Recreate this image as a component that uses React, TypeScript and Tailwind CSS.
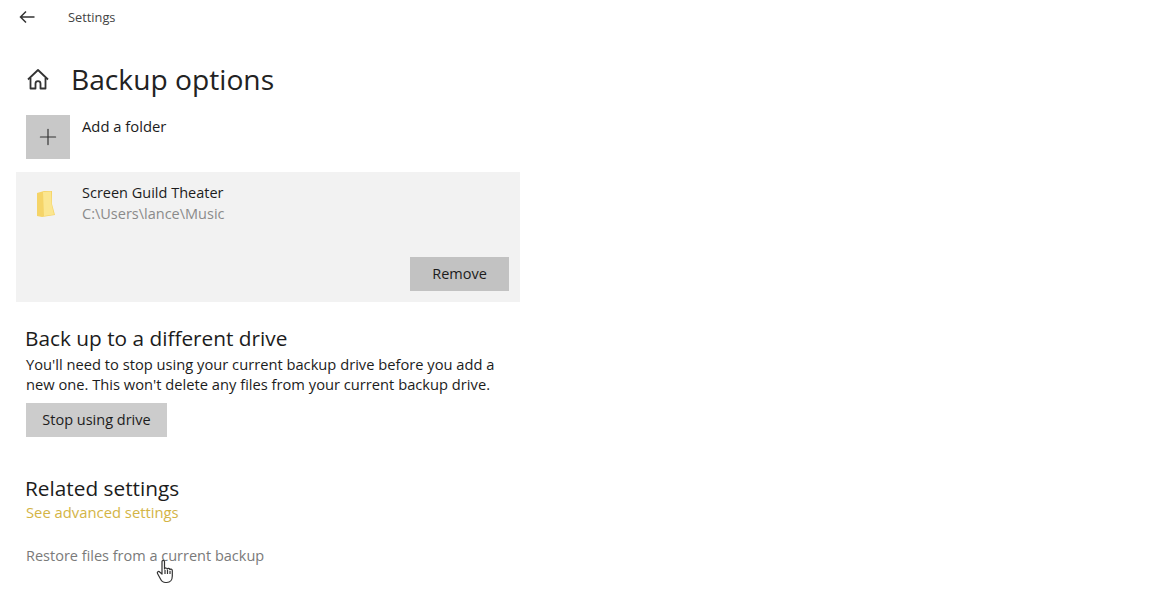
/**
 * Backup options - Windows settings page.
 */
import { Plus } from 'lucide-react';

const font = "font-['Open_Sans','Noto_Sans',sans-serif]";

function BackArrow() {
  return (
    <svg width="16" height="14" viewBox="0 0 16 14" fill="none" stroke="#333333" strokeWidth="1.500" className="-translate-y-px">
      <path d="M15.500 7H1.500M7 1.500 1.500 7 7 12.500" />
    </svg>
  );
}

function HomeIcon() {
  return (
    <svg width="22" height="22" viewBox="0 0 22 22" fill="none" stroke="#333333" strokeWidth="1.800" strokeLinejoin="round">
      <path d="M1 11.500 11 2l10 9.500" />
      <path d="M3.500 10v10.500h5v-5c0-3.300 5-3.300 5 0v5h5V10" />
    </svg>
  );
}

function FolderIcon() {
  return (
    <svg width="20" height="28" viewBox="0 0 20 28" className="shrink-0">
      <path d="M1 3 L8 1 L16 1 L16 14 L19 25 L6 27 L1 26 Z" fill="#f5d468" />
      <path d="M7 2 L15 1.500 L15.500 14 L18 24.500 L8 26 Z" fill="#fbe690" />
    </svg>
  );
}

function HandCursor() {
  return (
    <svg width="20" height="26" viewBox="0 0 20 26" className="absolute left-[156px] top-[559px]">
      <path
        d="M6 2.500c0-1.500 2.500-1.500 2.500 0V10c.3-1.400 2.600-1.400 2.800.2.3-1.200 2.500-1 2.600.5.4-.9 2.300-.7 2.400.8v5.500c0 3.500-2 6.500-5.500 6.500H9.500C7 23.500 5.500 22 4.500 20L1.500 14.500c-.8-1.500 1-2.800 2.200-1.500L6 15Z"
        fill="#ffffff"
        stroke="#333333"
        strokeWidth="1.200"
        strokeLinejoin="round"
      />
      <path d="M9 11v4M11.500 11v4M14 12v3" stroke="#333333" strokeWidth="1.200" />
    </svg>
  );
}

export default function App() {
  return (
    <div className={`${font} relative h-[600px] w-[1169px] overflow-hidden bg-white text-[#1c1c1c]`}>
      <div className="flex h-[36px] items-center pl-[19px]">
        <BackArrow />
        <span className="ml-[33px] text-[12.800px] text-[#444]">Settings</span>
      </div>

      <div className="mt-[24px] flex h-[38px] items-center pl-[27px]">
        <HomeIcon />
        <h1 className="ml-[22px] text-[28.200px] leading-[38px] text-[#222]">Backup options</h1>
      </div>

      <div className="mt-[17px] flex pl-[26px]">
        <div className="flex h-[44px] w-[44px] items-center justify-center bg-[#c8c8c8]">
          <Plus className="h-[26px] w-[26px] text-[#333]" strokeWidth={1.100} />
        </div>
        <span className="ml-[12px] text-[14.800px] leading-[22px]">Add a folder</span>
      </div>

      <div className="ml-[16px] mt-[13px] h-[130px] w-[504px] bg-[#f2f2f2] pt-[10px] pr-[11px]">
        <div className="flex pl-[20px]">
          <div className="pt-[8px]">
            <FolderIcon />
          </div>
          <div className="ml-[26px]">
            <div className="text-[14.500px] leading-[21px]">Screen Guild Theater</div>
            <div className="text-[14.500px] leading-[21px] text-[#8a8a8a]">C:\Users\lance\Music</div>
          </div>
        </div>
        <div className="mt-[33px] flex justify-end">
          <button className="h-[34px] w-[99px] bg-[#c2c2c2] text-[14.500px]">Remove</button>
        </div>
      </div>

      <div className="pl-[25px] pt-[21px]">
        <h2 className="text-[20.800px] leading-[30px]">Back up to a different drive</h2>
        <p className="ml-px mt-[1px] w-[480px] text-[14.700px] leading-[20px]">
          You'll need to stop using your current backup drive before you add a new one. This won't delete any files from your current backup drive.
        </p>
        <button className="ml-px mt-[9px] h-[34px] w-[141px] bg-[#cccccc] text-[14.500px]">Stop using drive</button>

        <h2 className="mt-[36px] text-[20.800px] leading-[30px]">Related settings</h2>
        <div className="ml-px text-[14.800px] leading-[18px] text-[#d3b445]">See advanced settings</div>
        <div className="ml-px mt-[25px] text-[14.500px] leading-[20px] text-[#7a7a7a]">Restore files from a current backup</div>
      </div>

      <HandCursor />
    </div>
  );
}
